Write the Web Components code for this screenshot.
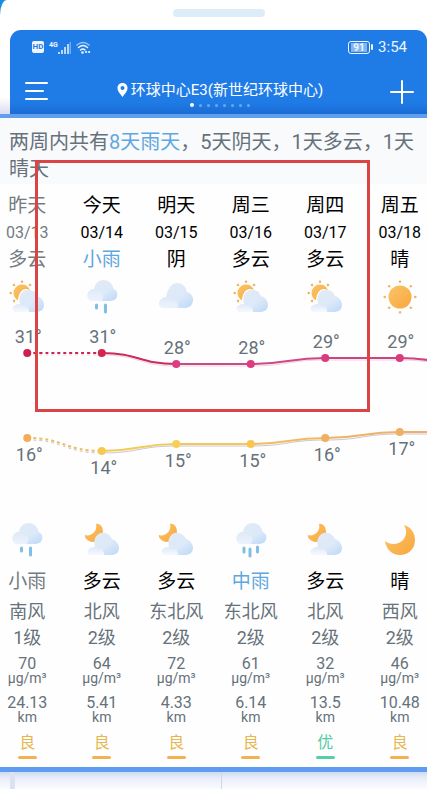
<!DOCTYPE html>
<html lang="zh-CN">
<head>
<meta charset="utf-8">
<meta name="viewport" content="width=device-width, initial-scale=1">
<title>天气预报</title>
<style>
html, body {
    margin: 0;
    height: 100%;
}
body {
    font-family: "Roboto", "Noto Sans CJK SC", sans-serif;
    background: #fff;
    color: #66717a;
    overflow-x: hidden;
}
</style>
</head>
<body>
<weather-app></weather-app>

<script>
const days = [
    { day: '昨天', date: '03/13', sky: '多云', icon: 'sun-cloud', high: 31, low: 16, hy: 38, ly: 123,
      nightIcon: 'rain', night: '小雨', wind: '南风', level: '1级', pm: '70', sight: '24.13', air: '良', past: true },
    { day: '今天', date: '03/14', sky: '小雨', icon: 'rain', high: 31, low: 14, hy: 38, ly: 136,
      nightIcon: 'moon-cloud', night: '多云', wind: '北风', level: '2级', pm: '64', sight: '5.41', air: '良' },
    { day: '明天', date: '03/15', sky: '阴', icon: 'cloud', high: 28, low: 15, hy: 49, ly: 129,
      nightIcon: 'moon-cloud', night: '多云', wind: '东北风', level: '2级', pm: '72', sight: '4.33', air: '良' },
    { day: '周三', date: '03/16', sky: '多云', icon: 'sun-cloud', high: 28, low: 15, hy: 49, ly: 129,
      nightIcon: 'heavy-rain', night: '中雨', wind: '东北风', level: '2级', pm: '61', sight: '6.14', air: '良' },
    { day: '周四', date: '03/17', sky: '多云', icon: 'sun-cloud', high: 29, low: 16, hy: 43, ly: 123,
      nightIcon: 'moon-cloud', night: '多云', wind: '北风', level: '2级', pm: '32', sight: '13.5', air: '优' },
    { day: '周五', date: '03/18', sky: '晴', icon: 'sun', high: 29, low: 17, hy: 43, ly: 117,
      nightIcon: 'moon', night: '晴', wind: '西风', level: '2级', pm: '46', sight: '10.48', air: '良' }
]

const gradients = `
<defs>
    <linearGradient id="c" x1="0" y1="0" x2="1" y2="1">
        <stop offset="0" stop-color="#e3ebf7"/><stop offset=".6" stop-color="#dce9f8"/><stop offset="1" stop-color="#bcd7f8"/>
    </linearGradient>
    <linearGradient id="p" x1="0" y1="0" x2="0" y2="1">
        <stop offset="0" stop-color="#dfe9f8"/><stop offset="1" stop-color="#f6fafe"/>
    </linearGradient>
    <linearGradient id="s" x1="0" y1="0" x2="1" y2="1">
        <stop offset="0" stop-color="#fbc469"/><stop offset="1" stop-color="#f9a73c"/>
    </linearGradient>
</defs>`

const lowCloud = `
<path fill="url(#c)" d="M9 33C5 33 3 31 4 28.500C5 26 8 25.500 11 25C9 18 12 12 17 11C22 10 26 13 28 17C32 18 35 22 35 26C35 31 31 33 27 33Z"/>
<path fill="url(#p)" d="M9 33C5 33 3 31 4 28.500C6 25 12 24 15 27C19 27 20 30 20 33Z"/>`

const rainCloud = `
<path fill="url(#c)" d="M9 22C5 22 3 19 3.500 15.500C4 12 7 10 10 10C11 4 15 1 19.500 1C25 1 29 5 29.500 10C32.500 11 34 14 33 17.500C32 21 29 22 25 22Z"/>
<path fill="url(#p)" opacity=".6" d="M9 22C5 22 3 19 3.500 15.500C5 10 11 8 15 12C20 13 20 18 18 22Z"/>`

const sunRays = (cx, cy, r) => [0, 45, 90, 135, 180, 225, 270, 315].map(a =>
    `<path d="M${cx - 1} ${cy - r}h2l-1 2z" fill="#eeb04e" stroke="#eeb04e" stroke-width=".8" stroke-linejoin="round" transform="rotate(${a} ${cx} ${cy})"/>`
).join('')

const pictures = {
    'sun-cloud': `${sunRays(13, 14, 12)}<circle cx="13" cy="14" r="8.500" fill="url(#s)"/>
        <path fill="#fff" d="M9 27C8 16 12 10 17 10C21 10 25 13 26 17L34 30H4Z"/>${lowCloud}`,
    'moon-cloud': `<path fill="url(#s)" d="M12 2C16 1 19 5 19 10C18 16 13 20 8 20C4 19 0 16 1 13C6 15 14 10 12 2Z"/>${lowCloud}`,
    'rain': `${rainCloud}<path d="M12.500 26v3M21.500 26v7" stroke="#80bfe3" stroke-width="3" stroke-linecap="round"/>`,
    'heavy-rain': `${rainCloud}<path d="M11 26v4M17 27v7M24.500 25v5" stroke="#80bfe3" stroke-width="3" stroke-linecap="round"/>`,
    'cloud': `<path fill="url(#c)" d="M7 29C2 29 0 26 1.500 22.500C2.500 20 5 18 8 18.500C9 10 14 4 19 4C25 4 28 8 29 13C33 14 36 18 35 22C34 27 31 29 26 29Z"/>
        <path fill="url(#p)" opacity=".6" d="M7 29C2 29 0 26 1.500 22.500C4 17 10 16 14 21C20 21 21 25 20 29Z"/>`,
    'sun': `${sunRays(18, 18, 16)}<circle cx="18" cy="18" r="11.500" fill="url(#s)"/>`,
    'moon': `<path fill="url(#s)" d="M22 3C29 5 33 11 33 18C33 27 26 33 18 33C10 33 4 27 3 19C8 23 16 23 21 18C25 13 25 8 22 3Z"/>`
}

class WeatherIcon extends HTMLElement {
    constructor() {
        super()
        this.attachShadow({ mode: 'open' })
    }

    connectedCallback() {
        this.shadowRoot.innerHTML = `
        <style>
            :host { display: block; width: 36px; height: 36px; }
            svg { display: block; }
        </style>
        <svg viewBox="0 0 36 36" width="36" height="36" aria-hidden="true">${gradients}${pictures[this.getAttribute('name')]}</svg>
        `
    }
}

class StatusBar extends HTMLElement {
    constructor() {
        super()
        this.attachShadow({ mode: 'open' })
    }

    connectedCallback() {
        this.shadowRoot.innerHTML = `
        <style>
            :host {
                display: flex;
                align-items: center;
                justify-content: space-between;
                padding: 0 20px 0 22px;
                height: 20px;
                color: #eef5ff;
            }
            .side { display: flex; align-items: center; gap: 5px; }
            .hd {
                font: bold 8px/12px "Roboto", sans-serif;
                width: 12px;
                text-align: center;
                color: #1f7ce6;
                background: #eef5ff;
                border-radius: 2px;
            }
            .signal { display: flex; }
            .net { font: bold 7px/8px "Roboto", sans-serif; }
            .battery { display: flex; align-items: center; gap: 1px; }
            .cell {
                box-sizing: border-box;
                width: 22px;
                font: bold 10px/11px "Roboto", sans-serif;
                text-align: center;
                border: 1px solid #eef5ff;
                border-radius: 3px;
                background: linear-gradient(#84b5ef, #84b5ef) center / 16px 9px no-repeat;
            }
            .battery i { width: 2px; height: 6px; background: #eef5ff; border-radius: 1px; }
            time { font-size: 15px; line-height: 20px; }
        </style>
        <div class="side">
            <span class="hd">HD</span>
            <span class="signal">
                <span class="net">4G</span>
                <svg width="13" height="13" viewBox="0 0 13 13" stroke="#eef5ff" stroke-width="1.500">
                    <path d="M1 13v-2M4 13V9M7 13V6M10 13V3"/><path d="M12.300 13V1" opacity=".4"/>
                </svg>
            </span>
            <svg width="15" height="13" viewBox="0 0 15 13" fill="none" stroke="#eef5ff" stroke-width="1.500" stroke-linecap="round">
                <path d="M1 4Q7 -1 13 4" opacity=".6"/><path d="M2.500 6.500Q7 2.500 11.500 6.500"/><path d="M4.500 9Q7 7 9 9"/>
                <circle cx="6.500" cy="11.500" r=".6"/><path d="M10 11h.2M13 11h.2" stroke-width="2"/>
            </svg>
        </div>
        <div class="side">
            <span class="battery"><span class="cell">91</span><i></i></span>
            <time>3:54</time>
        </div>
        `
    }
}

class CityBar extends HTMLElement {
    constructor() {
        super()
        this.attachShadow({ mode: 'open' })
    }

    connectedCallback() {
        this.shadowRoot.innerHTML = `
        <style>
            :host {
                display: flex;
                align-items: center;
                justify-content: space-between;
                padding: 0 13px 0 14px;
                margin-top: 20px;
                color: #fff;
            }
            button { display: flex; padding: 0; border: 0; background: none; cursor: pointer; }
            .city { display: flex; flex-direction: column; align-items: center; gap: 2px; }
            h1 {
                display: flex;
                align-items: center;
                gap: 3px;
                margin: 0;
                padding-top: 2px;
                font-size: 15px;
                font-weight: 400;
                line-height: 22px;
                white-space: nowrap;
            }
            .dots { display: flex; gap: 5px; align-items: center; height: 4px; }
            .dots i { width: 3px; height: 3px; border-radius: 50%; background: #68a7ee; }
            .dots i:first-child { width: 4px; height: 4px; background: #fff; }
        </style>
        <button type="button" aria-label="菜单">
            <svg width="26" height="24" viewBox="0 0 26 24" stroke="#fff" stroke-width="2" stroke-linecap="round"><path d="M2 3h21M2 11h17M2 19h21"/></svg>
        </button>
        <div class="city">
            <h1>
                <svg width="11" height="15" viewBox="0 0 11 15" fill="#fff" fill-rule="evenodd">
                    <path d="M5.500 0C8.500 0 10.500 2.200 10.500 5C10.500 8.500 7.500 11 5.500 14C3.500 11 .5 8.500 .5 5C.5 2.200 2.500 0 5.500 0ZM5.500 3A2 2 0 1 0 5.500 7A2 2 0 1 0 5.500 3Z"/>
                </svg>
                <span><slot></slot></span>
            </h1>
            <div class="dots">${'<i></i>'.repeat(8)}</div>
        </div>
        <button type="button" aria-label="添加城市">
            <svg width="24" height="24" viewBox="0 0 24 24" stroke="#fff" stroke-width="2" stroke-linecap="round"><path d="M1 12h22M12 1v22"/></svg>
        </button>
        `
    }
}

class DayHead extends HTMLElement {
    constructor() {
        super()
        this.attachShadow({ mode: 'open' })
    }

    set data(d) {
        this.shadowRoot.innerHTML = `
        <style>
            :host {
                display: flex;
                flex-direction: column;
                align-items: center;
                color: ${d.past ? '#737b81' : '#000'};
                font-size: 19px;
                line-height: 27px;
            }
            .date { font-size: 16px; }
            .rain { color: #5fa8df; }
            weather-icon { margin-top: 6px; }
        </style>
        <span>${d.day}</span>
        <span class="date">${d.date}</span>
        <span class="${d.sky.includes('雨') ? 'rain' : ''}">${d.sky}</span>
        <weather-icon name="${d.icon}"></weather-icon>
        `
    }
}

class DayFoot extends HTMLElement {
    constructor() {
        super()
        this.attachShadow({ mode: 'open' })
    }

    set data(d) {
        const rain = d.night.includes('雨') && !d.past
        this.shadowRoot.innerHTML = `
        <style>
            :host {
                display: flex;
                flex-direction: column;
                align-items: center;
                font-size: 18px;
                line-height: 26px;
            }
            .sky {
                margin: 10px 0 4px;
                font-size: 19px;
                line-height: 27px;
                color: ${rain ? '#5fa8df' : d.past ? '#737b81' : '#000'};
            }
            .num { margin-top: 6px; font-size: 16px; line-height: 14px; }
            .unit { font-size: 14px; line-height: 14px; }
            .sight { margin-top: 11px; }
            .air {
                display: flex;
                flex-direction: column;
                align-items: center;
                gap: 3px;
                margin-top: 9px;
                font-size: 16px;
                line-height: 20px;
                color: ${d.air === '优' ? '#55cba4' : '#e8b64f'};
            }
            .air::after {
                content: "";
                width: 19px;
                height: 3px;
                border-radius: 2px;
                background: ${d.air === '优' ? '#55cfa5' : '#f3b152'};
            }
        </style>
        <weather-icon name="${d.nightIcon}"></weather-icon>
        <span class="sky">${d.night}</span>
        <span>${d.wind}</span>
        <span>${d.level}</span>
        <span class="num">${d.pm}</span>
        <span class="unit">μg/m³</span>
        <span class="num sight">${d.sight}</span>
        <span class="unit">km</span>
        <span class="air">${d.air}</span>
        `
    }
}

class TempChart extends HTMLElement {
    constructor() {
        super()
        this.attachShadow({ mode: 'open' })
    }

    connectedCallback() {
        this.draw()
        new ResizeObserver(() => this.draw()).observe(this)
    }

    // smooth step between two neighbouring days
    curve(x1, y1, x2, y2) {
        const mid = (x1 + x2) / 2
        return `M${x1} ${y1}C${mid} ${y1} ${mid} ${y2} ${x2} ${y2}`
    }

    line(key, xs, colors, end, shadow) {
        const step = xs[1] - xs[0]
        const ys = days.map(d => d[key]).concat(end)
        const all = xs.concat(xs[5] + step)
        let out = ''
        for (let i = 0; i < 6; i++) {
            const d = this.curve(all[i], ys[i], all[i + 1], ys[i + 1])
            const dash = i === 0 ? 'stroke-dasharray="3 3"' : ''
            out += `<path d="${d}" transform="translate(0 2)" stroke="${shadow}" stroke-width="1" ${dash}/>
                <path d="${d}" stroke="${colors[i]}" stroke-width="2" ${dash}/>`
        }
        return out
    }

    draw() {
        const w = this.clientWidth
        const xs = days.map((d, i) => w / 12 * (2 * i + 1))
        const hot = ['#c62850', '#c72d59', '#ca4a84', '#ca4a84', '#c94680', '#c94680']
        const cold = ['#e9bd62', '#f2cb57', '#f3c858', '#f0bd5e', '#eeb262', '#eeb262']
        const hotDots = ['#cf1f4e', '#d7234f', '#df3d82', '#dc3b80', '#da3a7e', '#da3a7e']
        const coldDots = ['#f5ab58', '#f5c951', '#f8cf56', '#fac64f', '#f0ae60', '#efaf65']
        this.shadowRoot.innerHTML = `
        <style>
            :host { display: block; height: 207px; }
            svg { display: block; width: 100%; height: 100%; }
            text { font-size: 18px; fill: #66717a; text-anchor: middle; }
        </style>
        <svg fill="none">
            ${this.line('hy', xs, hot, 50, '#f3cfe2')}
            ${this.line('ly', xs, cold, 117, '#cfc4d8')}
            ${days.map((d, i) => `
                <circle cx="${xs[i]}" cy="${d.hy}" r="4" fill="${hotDots[i]}"/>
                <circle cx="${xs[i]}" cy="${d.ly}" r="4" fill="${coldDots[i]}"/>
                <text x="${xs[i] + 1}" y="${d.hy - 10}">${d.high}°</text>
                <text x="${xs[i] + 2}" y="${d.ly + 23}">${d.low}°</text>
            `).join('')}
        </svg>
        `
    }
}

class ForecastPanel extends HTMLElement {
    constructor() {
        super()
        this.attachShadow({ mode: 'open' })
    }

    connectedCallback() {
        this.shadowRoot.innerHTML = `
        <style>
            :host {
                display: block;
                position: relative;
                overflow: hidden;
                background: #fefefe;
                border-top: 4px solid #5f9fee;
                border-bottom: 5px solid #5f9bee;
            }
            p {
                margin: 0;
                padding: 11px 3px 1px 9px;
                font-size: 20px;
                line-height: 27px;
                background: #f9fafc;
            }
            .scroll { margin: 0 -10px; padding: 8px 0; }
            .row { display: grid; grid-template-columns: repeat(6, 1fr); }
            .frame {
                position: absolute;
                top: 42px;
                left: 35px;
                right: 57px;
                height: 246px;
                border: 3px solid #dc4345;
            }
        </style>
        <p><slot></slot></p>
        <div class="scroll">
            <div class="row heads"></div>
            <temp-chart></temp-chart>
            <div class="row feet"></div>
        </div>
        <div class="frame"></div>
        `
        days.forEach(d => {
            const head = document.createElement('day-head')
            const foot = document.createElement('day-foot')
            head.data = d
            foot.data = d
            this.shadowRoot.querySelector('.heads').append(head)
            this.shadowRoot.querySelector('.feet').append(foot)
        })
    }
}

class WeatherApp extends HTMLElement {
    constructor() {
        super()
        this.attachShadow({ mode: 'open' })
    }

    connectedCallback() {
        this.shadowRoot.innerHTML = `
        <style>
            :host { display: flex; flex-direction: column; min-height: 100%; background: #1b8be0; }
            .phone {
                padding: 9px 0 0 10px;
                border-radius: 7px 0 0 0 / 15px 0 0 0;
                background: linear-gradient(#fff 85%, #dcdcf2);
            }
            .speaker {
                width: 92px;
                height: 8px;
                margin: 0 auto 13px;
                border-radius: 4px;
                background: #dcedf8;
            }
            header {
                height: 77px;
                padding-top: 7px;
                border-radius: 11px 11px 0 0;
                background: linear-gradient(#1f7ce7 85%, #1b6bd4);
            }
            b { font-weight: 400; color: #5fa8df; }
            footer {
                flex: 1;
                display: flex;
                min-height: 17px;
                background: linear-gradient(#cddbf4, #e9edf8 6px, #fbfcff 17px);
            }
            footer i { flex: 1; border-right: 1px solid #cfd6e6; }
            footer i:first-child { flex: 0 0 10px; border-right: 5px solid #dbe2f1; }
            footer i:last-child { border: 0; }
        </style>
        <div class="phone">
            <div class="speaker"></div>
            <header>
                <status-bar></status-bar>
                <city-bar>环球中心E3(新世纪环球中心)</city-bar>
            </header>
        </div>
        <forecast-panel>两周内共有<b>8天雨天</b>，5天阴天，1天多云，1天晴天</forecast-panel>
        <footer><i></i><i></i><i></i></footer>
        `
    }
}

customElements.define('weather-icon', WeatherIcon)
customElements.define('status-bar', StatusBar)
customElements.define('city-bar', CityBar)
customElements.define('day-head', DayHead)
customElements.define('day-foot', DayFoot)
customElements.define('temp-chart', TempChart)
customElements.define('forecast-panel', ForecastPanel)
customElements.define('weather-app', WeatherApp)
</script>
</body>
</html>
